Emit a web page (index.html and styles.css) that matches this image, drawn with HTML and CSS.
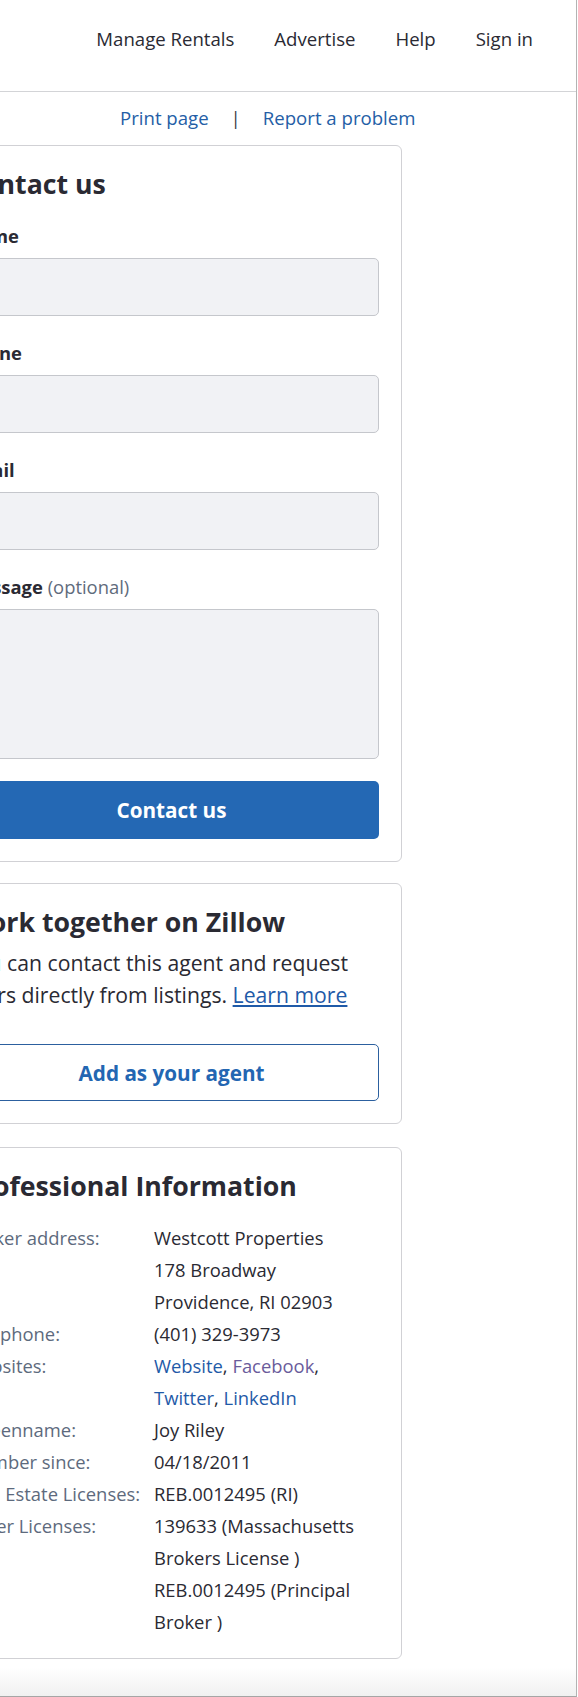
FILE: index.html
```html
<!DOCTYPE html>
<html lang="en">
<head>
<meta charset="utf-8">
<title>Agent profile</title>
<link rel="stylesheet" href="styles.css">
</head>
<body>
<div class="frame">
  <header class="topbar">
    <nav class="nav">
      <a class="nav-link" href="#">Manage Rentals</a>
      <a class="nav-link" href="#">Advertise</a>
      <a class="nav-link" href="#">Help</a>
      <a class="nav-link" href="#">Sign in</a>
    </nav>
  </header>

  <div class="toolbar">
    <a class="tool-link" href="#">Print page</a>
    <span class="tool-sep">|</span>
    <a class="tool-link" href="#">Report a problem</a>
  </div>

  <main class="column">
    <section class="card">
      <h2 class="card-title">Contact us</h2>
      <label class="field-label">Name</label>
      <div class="field-input"></div>
      <label class="field-label">Phone</label>
      <div class="field-input"></div>
      <label class="field-label">Email</label>
      <div class="field-input"></div>
      <label class="field-label">Message <span class="optional">(optional)</span></label>
      <div class="field-input field-textarea"></div>
      <button class="btn-primary" type="button">Contact us</button>
    </section>

    <section class="card card-spaced">
      <h2 class="card-title">Work together on Zillow</h2>
      <p class="card-text">You can contact this agent and request tours directly from listings. <a class="text-link" href="#">Learn more</a></p>
      <button class="btn-outline" type="button">Add as your agent</button>
    </section>

    <section class="card card-spaced card-info">
      <h2 class="card-title">Professional Information</h2>
      <dl class="info-grid">
        <dt class="info-label">Broker address:</dt>
        <dd class="info-value">Westcott Properties<br>178 Broadway<br>Providence, RI 02903</dd>
        <dt class="info-label">Cell phone:</dt>
        <dd class="info-value">(401) 329-3973</dd>
        <dt class="info-label">Websites:</dt>
        <dd class="info-value"><a class="info-link" href="#">Website</a>, <a class="info-link visited" href="#">Facebook</a>,<br><a class="info-link" href="#">Twitter</a>, <a class="info-link" href="#">LinkedIn</a></dd>
        <dt class="info-label">Screenname:</dt>
        <dd class="info-value">Joy Riley</dd>
        <dt class="info-label">Member since:</dt>
        <dd class="info-value">04/18/2011</dd>
        <dt class="info-label">Real Estate Licenses:</dt>
        <dd class="info-value">REB.0012495 (RI)</dd>
        <dt class="info-label">Other Licenses:</dt>
        <dd class="info-value">139633 (Massachusetts<br>Brokers License )<br>REB.0012495 (Principal<br>Broker )</dd>
      </dl>
    </section>
  </main>

  <div class="bottom-shade"></div>
</div>
</body>
</html>
```

FILE: styles.css
```css
html, body {
  margin: 0;
  padding: 0;
  background: #ffffff;
}

body {
  font-family: "Open Sans", "DejaVu Sans", sans-serif;
  color: #2a2a33;
  font-size: 18.4px;
  line-height: 25px;
}

.frame {
  width: 576px;
  height: 1696px;
  border-right: 1px solid #b3b3b3;
  border-bottom: 1px solid #a6a6a6;
  overflow: hidden;
  background: #ffffff;
}

/* header */
.topbar {
  height: 91px;
  border-bottom: 1px solid #d3d4d7;
  box-sizing: content-box;
}

.nav {
  display: flex;
  justify-content: flex-end;
  gap: 40px;
  padding: 26px 43px 0 0;
}

.nav-link {
  color: #2a2a33;
  text-decoration: none;
  font-size: 18.6px;
  line-height: 25px;
  white-space: nowrap;
}

/* print / report row */
.toolbar {
  display: flex;
  gap: 22px;
  padding: 13px 0 15px 120px;
  line-height: 25px;
  font-size: 18.6px;
}

.tool-link {
  color: #245ea6;
  text-decoration: none;
}

.tool-sep {
  color: #3b3d45;
}

/* cards */
.column {
  margin-left: -59px;
  width: 461px;
}

.card {
  box-sizing: border-box;
  width: 100%;
  border: 1px solid #d1d1d5;
  border-radius: 6px;
  padding: 22px;
  display: flex;
  flex-direction: column;
}

.card-spaced {
  margin-top: 21px;
}

.card-info {
  margin-top: 23px;
  padding-bottom: 20px;
}

.card-title {
  margin: -2.5px 0;
  font-size: 26.7px;
  line-height: 36px;
  font-weight: 700;
  color: #2a2a33;
  white-space: nowrap;
}

.field-label {
  display: block;
  margin-top: 24px;
  font-weight: 700;
  line-height: 25px;
  color: #2a2a33;
  white-space: nowrap;
}

.optional {
  font-weight: 400;
  color: #5f6b7c;
}

.field-input {
  box-sizing: border-box;
  margin-top: 10px;
  height: 58px;
  background: #f1f2f5;
  border: 1px solid #c5c7cc;
  border-radius: 5px;
}

.field-textarea {
  height: 150px;
}

.btn-primary {
  margin-top: 22px;
  height: 58px;
  border: none;
  border-radius: 5px;
  background: #2468b4;
  color: #ffffff;
  font-family: "Open Sans", "DejaVu Sans", sans-serif;
  font-size: 20.7px;
  font-weight: 700;
  padding: 0;
}

.card-text {
  margin: 10px 0 0;
  font-size: 21.2px;
  line-height: 32px;
  color: #2a2a33;
}

.text-link {
  color: #1f5aa8;
  text-decoration: underline;
}

.btn-outline {
  margin-top: 33px;
  height: 57px;
  border: 1px solid #2c609f;
  border-radius: 5px;
  background: #ffffff;
  color: #2366b2;
  font-family: "Open Sans", "DejaVu Sans", sans-serif;
  font-size: 20.7px;
  font-weight: 700;
  padding: 0;
}

/* professional info */
.info-grid {
  margin: 21px 0 0;
  display: grid;
  grid-template-columns: 190px 1fr;
  line-height: 32px;
  font-size: 18.4px;
}

.info-label {
  margin: 0;
  color: #5d6a7d;
  white-space: nowrap;
}

.info-value {
  margin: 0;
  color: #2a2a33;
}

.info-link {
  color: #1f5aa8;
  text-decoration: none;
}

.info-link.visited {
  color: #6a5b9b;
}

.bottom-shade {
  margin-top: 8px;
  height: 40px;
  background: linear-gradient(to bottom, #ffffff 0%, #ebebeb 100%);
}
```
